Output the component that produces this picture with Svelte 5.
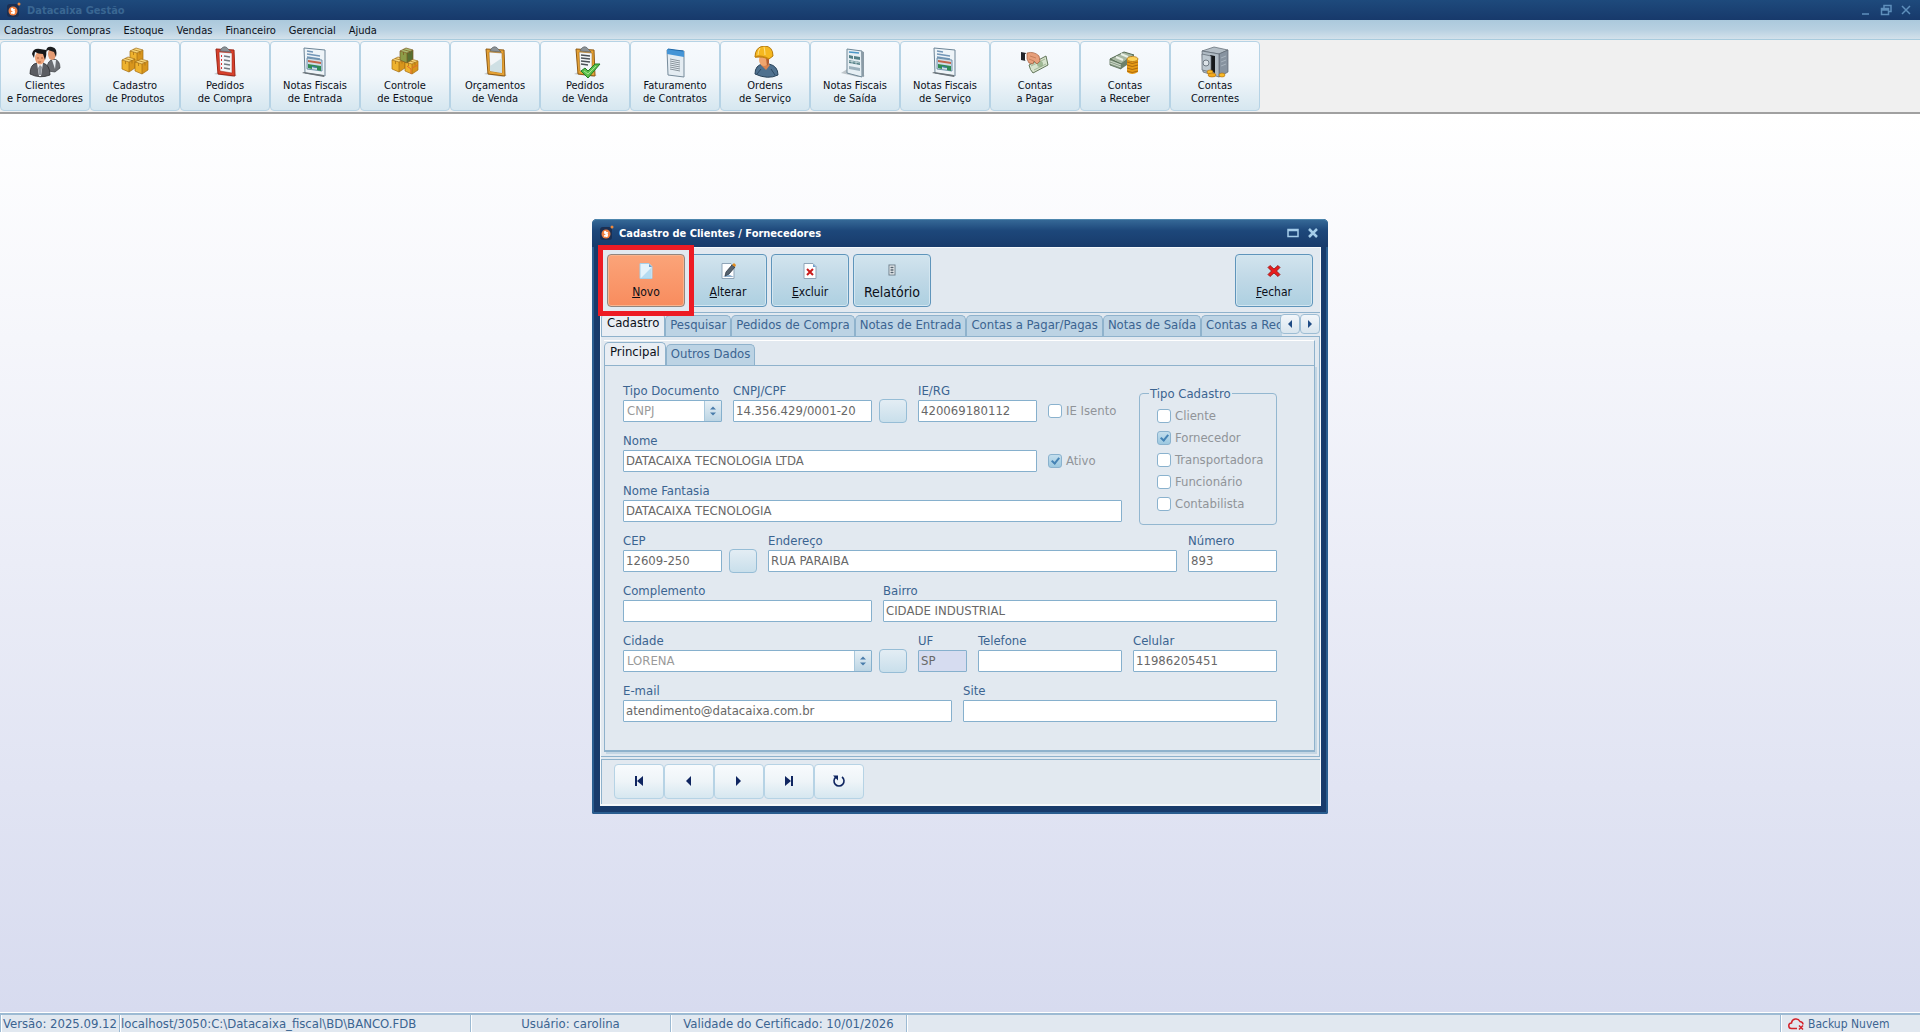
<script>
	const menus = ['Cadastros', 'Compras', 'Estoque', 'Vendas', 'Financeiro', 'Gerencial', 'Ajuda'];

	const shortcuts = [
		{ icon: 'people', lines: ['Clientes', 'e Fornecedores'] },
		{ icon: 'boxes', lines: ['Cadastro', 'de Produtos'] },
		{ icon: 'clipRed', lines: ['Pedidos', 'de Compra'] },
		{ icon: 'invoice', lines: ['Notas Fiscais', 'de Entrada'] },
		{ icon: 'stock', lines: ['Controle', 'de Estoque'] },
		{ icon: 'clipGold', lines: ['Orçamentos', 'de Venda'] },
		{ icon: 'clipCheck', lines: ['Pedidos', 'de Venda'] },
		{ icon: 'contract', lines: ['Faturamento', 'de Contratos'] },
		{ icon: 'worker', lines: ['Ordens', 'de Serviço'] },
		{ icon: 'invoiceOut', lines: ['Notas Fiscais', 'de Saída'] },
		{ icon: 'invoice', lines: ['Notas Fiscais', 'de Serviço'] },
		{ icon: 'pay', lines: ['Contas', 'a Pagar'] },
		{ icon: 'receive', lines: ['Contas', 'a Receber'] },
		{ icon: 'safe', lines: ['Contas', 'Correntes'] }
	];

	const tabs = [
		'Cadastro',
		'Pesquisar',
		'Pedidos de Compra',
		'Notas de Entrada',
		'Contas a Pagar/Pagas',
		'Notas de Saída',
		'Contas a Rec'
	];
	const subTabs = ['Principal', 'Outros Dados'];
	const navs = ['first', 'prev', 'next', 'last', 'refresh'];
	const navLabels = ['Primeiro', 'Anterior', 'Próximo', 'Último', 'Atualizar'];

	let tab = $state('Cadastro');
	let subTab = $state('Principal');

	let kinds = $state([
		{ name: 'Cliente', checked: false },
		{ name: 'Fornecedor', checked: true },
		{ name: 'Transportadora', checked: false },
		{ name: 'Funcionário', checked: false },
		{ name: 'Contabilista', checked: false }
	]);
</script>

{#snippet logo()}
	<svg class="logo" viewBox="0 0 16 16" aria-hidden="true">
		<rect x="1" y="2" width="12" height="13" rx="3" fill="#1b2f52" />
		<circle cx="7" cy="9" r="4.5" fill="#f08040" />
		<path d="M7 6.5c-2 0-2 2 0 2.5s2 2.5 0 2.500M5 7l4 1M5 11l4-1" stroke="#fff" stroke-width="1.3" fill="none" />
		<circle cx="13" cy="2" r="1.5" fill="#f08a3c" />
	</svg>
{/snippet}

{#snippet crate(x, y, green)}
	<g transform="translate({x} {y})">
		<path d="M0 3l6-3 7 2-6 3z" fill={green ? '#a9bf74' : '#f8d87c'} />
		<path d="M0 3l7 2v10l-7-3z" fill={green ? '#8c9c48' : '#eeb22e'} />
		<path d="M7 5l6-3v9l-6 4z" fill={green ? '#567032' : '#d8951c'} />
		<path
			d="M0 3l6-3 7 2-6 3zM0 3v9l7 3 6-4V2M7 5v10M3 1.500l7 2M3.500 4v3M10 3.500v3"
			fill="none"
			stroke={green ? '#7c5a20' : '#a36d12'}
			stroke-width=".7"
		/>
	</g>
{/snippet}

{#snippet clipboard(frame, dark)}
	<path d="M5 28l6-3 17 4-4 2z" fill="#9aa2a8" opacity=".5" />
	<path d="M7 3l18 1 1 26-17-2z" fill={frame} stroke={dark} />
	<path d="M10 6l13 1v20l-12-2z" fill="#f3f6f8" stroke={dark} stroke-width=".5" />
	<path d="M12 3q4-5 8 1l2 2-11-1z" fill="#8b9297" stroke="#5b6166" stroke-width=".7" />
{/snippet}

{#snippet bigIcon(name)}
	<svg class="big-icon" viewBox="0 0 32 32" aria-hidden="true">
		{#if name === 'people'}
			<path d="M18 23q0-9 7-10 6 1 6 9l-5 4-7-1z" fill="#6b6e73" stroke="#3b3d40" stroke-width=".7" />
			<path d="M23 14h4l-1 9z" fill="#e9eef2" />
			<ellipse cx="23" cy="8" rx="4" ry="6" fill="#e39a72" />
			<path d="M17 6q0-6 6-5 6 1 4 10l-2-5-6-2z" fill="#1c1d1f" />
			<path d="M1 28q0-10 7-11h6q7 2 7 12-10 4-20-1z" fill="#5b5d62" stroke="#2c2d30" stroke-width=".8" />
			<path d="M8 17h6l-2 13h-2z" fill="#f4f6f8" />
			<path d="M11 19l2 2-1 8h-2l-1-7z" fill="#8f949b" />
			<ellipse cx="11" cy="12" rx="5" ry="6.500" fill="#f0a47a" />
			<path d="M3 8q1-6 8-5l6 1q1 4-1 10l-2-6q-5 0-8-2l-1 6z" fill="#17181a" />
			<path d="M8 12h2M12 12h2M9 16h3" stroke="#9c4f2c" stroke-width=".8" />
		{:else if name === 'boxes'}
			{@render crate(11, 2, false)}
			{@render crate(3, 11, false)}
			{@render crate(16, 13, false)}
		{:else if name === 'stock'}
			{@render crate(3, 11, false)}
			{@render crate(16, 13, false)}
			{@render crate(11, 2, true)}
			<path d="M18 20l4 3v5M23 22l6-3" stroke="#e0692a" fill="none" />
		{:else if name === 'clipRed'}
			{@render clipboard('#d8412c', '#9c2415')}
			<path d="M15 10l6 1M15 14l6 1M15 18l6 1M15 22l6 1" stroke="#727a80" stroke-width="1.500" />
			<path d="M12 10h1M12 14h1M12 18h1M12 22h1" stroke="#d33" stroke-width="2" />
		{:else if name === 'clipGold'}
			{@render clipboard('#e5a235', '#8f5a12')}
			<path d="M11 20l12-8v15l-12-2z" fill="#cfe0e4" />
		{:else if name === 'clipCheck'}
			{@render clipboard('#e5a235', '#8f5a12')}
			<path d="M12 9l9 1M12 12l9 1M12 15l9 1M12 18l7 1" stroke="#4b5156" stroke-width="1.300" />
			<path d="M12 25l4-3 3 3 7-7h5L19 32z" fill="#5cc04a" stroke="#1f7d26" />
			<path d="M15 25l4 3 8-8" fill="none" stroke="#a6e493" />
		{:else if name === 'invoice'}
			<path d="M5 2l21 2v26L6 27z" fill="#eef4f8" stroke="#6c8496" />
			<path d="M3 27l22 4v-2L5 26z" fill="#6b7379" />
			<path d="M8 5l6 1M8 8l13 2M8 11l13 2" stroke="#7195b6" stroke-width="1.300" />
			<path d="M8 12l15 2v11L8 23z" fill="#cfdde6" stroke="#567f9c" stroke-width=".8" />
			<path d="M9 14l13 2v2l-13-2z" fill="#c4634a" />
			<path d="M9 18l13 2v5l-4-1v-2l-5-1v2l-4-1z" fill="#2f8a52" />
			<path d="M13 20l5 1v1l-5-1z" fill="#3f78b8" />
		{:else if name === 'invoiceOut'}
			<path d="M2 27l8-5 16 8-7 1z" fill="#9da5aa" opacity=".6" />
			<path d="M8 3l15 2v26L8 27z" fill="#e6eff4" stroke="#6f8796" />
			<path d="M22 5l3 1v25l-2-1z" fill="#8b9ba6" />
			<path d="M10 6l10 1" stroke="#4a97c8" stroke-width="1.600" />
			<path d="M10 9l4 1v3l-4-1zM15 10l6 1v3l-6-1zM10 14l11 2v3l-11-2z" fill="#537f86" />
			<path d="M10 20l11 2v3l-11-2z" fill="#9bb1bd" />
			<path d="M10 15l11 2M13 13v5M17 14v5" stroke="#d8e6ea" stroke-width=".7" />
		{:else if name === 'contract'}
			<path d="M8 4l17 1v26L9 29z" fill="#e4ecf2" stroke="#768b9b" />
			<path d="M8 3l17 2v6L8 8z" fill="#4595d6" />
			<path d="M9 3l15 2" stroke="#1f68a8" />
			<path
				d="M11 13l10 2M11 15l10 2M11 17l10 2M11 19l10 2M11 21l10 2M11 23l10 2"
				stroke="#8a959d"
				stroke-width="1"
			/>
		{:else if name === 'worker'}
			<path d="M6 28q0-9 8-10h6q9 2 9 11-10 5-23-1z" fill="#4f718f" stroke="#29435a" />
			<path d="M12 19l5 5 4-5-3-2h-4z" fill="#d8834e" />
			<path d="M8 28l4-5M26 29l-4-6" stroke="#2c4964" />
			<ellipse cx="15" cy="14" rx="5" ry="6" fill="#f0a56e" />
			<path d="M20 10v7l-2 3-1-8z" fill="#b55e32" />
			<path d="M6 11q0-10 9-11 9 0 9 10l-4 3q-6-3-14-2z" fill="#f5b81f" stroke="#b57a0c" />
			<path d="M11 2q-2 3-2 7M15 1q1 4 1 8" stroke="#ffe28a" fill="none" />
			<path d="M6 11q8-2 14 2" stroke="#c98712" fill="none" stroke-width="1.500" />
		{:else if name === 'pay'}
			<path d="M2 6l5 1v8l-5-1z" fill="#22252b" />
			<path d="M6 8l2-1v7l-2 1z" fill="#fff" />
			<path d="M10 19l17-9 2 9-15 8q-3-3-4-8z" fill="#d7e3cd" stroke="#62765a" />
			<circle cx="21" cy="18" r="3" fill="#9fb894" />
			<path d="M12 20l14-7M15 24l12-6" stroke="#8ba37f" stroke-width=".7" />
			<path d="M8 7q7-2 12 3l1 5-3 3-3-3-1 3-4-1-2-4z" fill="#e7a07c" stroke="#a45f3c" stroke-width=".7" />
			<path d="M11 10l6 2M10 13l5 2" stroke="#b87450" stroke-width=".7" />
		{:else if name === 'receive'}
			<path d="M1 13l14-7 10 3-13 9z" fill="#a7b7a2" stroke="#566b54" />
			<path d="M1 13v6l11 4v-5z" fill="#8a9d86" stroke="#566b54" stroke-width=".8" />
			<path d="M1 15l11 4M1 17l11 4" stroke="#dfe8dc" stroke-width=".8" />
			<path d="M12 18v5l6-4v-6z" fill="#6c806a" />
			<path d="M7 11l7 3M12 8l7 3" stroke="#e9f0e6" stroke-width="2" />
			<path d="M18 13v13q5 4 11 0V13z" fill="#e79a14" />
			<path d="M18 16q5 3 11 0M18 19q5 3 11 0M18 22q5 3 11 0M18 25q5 3 11 0" fill="none" stroke="#9c5d0c" stroke-width=".8" />
			<ellipse cx="23.5" cy="13" rx="5.500" ry="2.500" fill="#fcd25a" stroke="#b87610" stroke-width=".8" />
		{:else if name === 'safe'}
			<path d="M3 5l12-4 14 3-9 4z" fill="#b4bec6" stroke="#5c666f" stroke-width=".7" />
			<path d="M20 8l9-4v22l-9 5z" fill="#8793a0" stroke="#5b6670" stroke-width=".7" />
			<path d="M3 5l17 3v23L4 26z" fill="#b0bbc4" stroke="#5b6670" stroke-width=".7" />
			<path d="M11 9l5 1v17l-5-2z" fill="#15181b" />
			<path d="M3 8l9 2v16l-9-2z" fill="#bcc7cf" stroke="#5c666f" stroke-width=".7" />
			<circle cx="7" cy="17" r="3" fill="#dde4e9" stroke="#6f7a83" />
			<path d="M22 12l5-2M22 16l5-2M22 20l5-2" stroke="#a9b4be" />
			<ellipse cx="11" cy="26" rx="3" ry="2" fill="#f7b928" stroke="#a9690d" stroke-width=".6" />
			<ellipse cx="13" cy="29" rx="4" ry="2" fill="#f3a91c" stroke="#a9690d" stroke-width=".6" />
			<ellipse cx="23" cy="29" rx="3" ry="2" fill="#f7b928" stroke="#a9690d" stroke-width=".6" />
		{/if}
	</svg>
{/snippet}

{#snippet toolIcon(name)}
	<svg class="tool-icon" viewBox="0 0 16 16" aria-hidden="true">
		{#if name === 'new' || name === 'edit' || name === 'delete'}
			<path d="M2 .500h9l3 3v12H2z" fill={name === 'new' ? '#e4f3fb' : '#fdfeff'} stroke={name === 'new' ? '#a5cfe8' : '#8fa5b8'} />
			<path d="M11 1v3h3z" fill="#6d9fce" />
		{/if}
		{#if name === 'new'}
			<path d="M3 15L13 5v10z" fill="#b5dcf2" />
		{:else if name === 'edit'}
			<path d="M3 14h11l-6-3z" fill="#91b0cc" />
			<path d="M6 9l6-7 3 2-6 7-4 2z" fill="#56636f" stroke="#303a45" stroke-width=".8" />
			<path d="M12 2l2-2 2 2-1 2z" fill="#e28b1c" />
		{:else if name === 'delete'}
			<path d="M5 6l6 6M11 6l-6 6" stroke="#c91b1b" stroke-width="2" />
		{:else if name === 'report'}
			<rect x="5" y="2" width="6" height="10" fill="#eef2f4" stroke="#70808c" />
			<path d="M6.500 4.500h3M6.500 7h3M6.500 9.500h3" stroke="#56636e" stroke-width="1.300" />
		{:else}
			<path
				d="M4 2.500l4 3.500 4-3.500 2 2L10.500 8l3.500 3.500-2 2-4-3.500-4 3.500-2-2L5.500 8 2 4.500z"
				fill="#e81c1c"
				stroke="#8e1010"
				stroke-width=".8"
			/>
		{/if}
	</svg>
{/snippet}

{#snippet navIcon(name)}
	<svg class="nav-icon" viewBox="0 0 16 16" aria-hidden="true">
		{#if name === 'first'}
			<path d="M5 3v10" stroke="#0f2560" stroke-width="2" /><path d="M12 3v10L6 8z" fill="#0f2560" />
		{:else if name === 'prev'}
			<path d="M10 3v10L5 8z" fill="#0f2560" />
		{:else if name === 'next'}
			<path d="M5 3v10l5-5z" fill="#0f2560" />
		{:else if name === 'last'}
			<path d="M11 3v10" stroke="#0f2560" stroke-width="2" /><path d="M4 3v10l6-5z" fill="#0f2560" />
		{:else}
			<path d="M5 4a5 5 0 1 0 6 0" fill="none" stroke="#0f2560" stroke-width="1.600" />
			<path d="M2 2.500h5v5z" fill="#0f2560" />
		{/if}
	</svg>
{/snippet}

{#snippet field(id, label, value, cls)}
	<div class="field {cls}">
		<label for={id}>{label}</label>
		<input {id} {value} type="text" readonly />
	</div>
{/snippet}

{#snippet combo(id, label, value, cls)}
	<div class="field {cls}">
		<label for={id}>{label}</label>
		<div class="combo">
			<select {id} disabled><option>{value}</option></select>
			<span class="spin">
				<svg viewBox="0 0 8 12" aria-hidden="true">
					<path d="M1 4.500l3-3 3 3zM1 7.500l3 3 3-3z" fill="#4a7dab" />
				</svg>
			</span>
		</div>
	</div>
{/snippet}

<div class="app">
	<header class="titlebar">
		{@render logo()}
		<span class="app-name">Datacaixa Gestão</span>
		<div class="window-controls">
			<button aria-label="Minimizar"><svg viewBox="0 0 12 12"><path d="M2 10h7" /></svg></button>
			<button aria-label="Restaurar">
				<svg viewBox="0 0 12 12"><path d="M4 4V1.500h7v6H9M1.500 4.500h7v6h-7zM1 6h7" /></svg>
			</button>
			<button aria-label="Fechar"><svg viewBox="0 0 12 12"><path d="M2 2l8 8M10 2l-8 8" /></svg></button>
		</div>
	</header>

	<nav class="menubar">
		{#each menus as menu}
			<button>{menu}</button>
		{/each}
	</nav>

	<div class="shortcuts">
		{#each shortcuts as item}
			<button>
				{@render bigIcon(item.icon)}
				<span>{item.lines[0]}<br />{item.lines[1]}</span>
			</button>
		{/each}
	</div>

	<main class="desktop"></main>

	<footer class="status">
		<span class="version">Versão: 2025.09.12</span>
		<span class="database">localhost/3050:C:\Datacaixa_fiscal\BD\BANCO.FDB</span>
		<span class="user">Usuário: carolina</span>
		<span class="certificate">Validade do Certificado: 10/01/2026</span>
		<span class="filler"></span>
		<span class="backup">
			<svg viewBox="0 0 16 12" aria-hidden="true">
				<path
					d="M9 10.500H3.500A2.700 2.700 0 0 1 3.500 5 4.500 4.500 0 0 1 12 3.500Q15 4 15 6.500"
					fill="none"
					stroke="#d3242c"
					stroke-width="1.500"
				/>
				<path d="M11 7.500l4 4M15 7.500l-4 4" stroke="#d3242c" stroke-width="1.500" />
			</svg>
			Backup Nuvem
		</span>
	</footer>

	<div class="window-layer">
		<section class="dialog">
			<header class="dialog-title">
				{@render logo()}
				<h1>Cadastro de Clientes / Fornecedores</h1>
				<div class="window-controls">
					<button aria-label="Maximizar"><svg viewBox="0 0 12 12"><path d="M1 2.500h10v7H1zM1 3.500h10" /></svg></button>
					<button aria-label="Fechar janela">
						<svg viewBox="0 0 12 12"><path d="M2 2l8 8M10 2l-8 8" stroke-width="2.500" /></svg>
					</button>
				</div>
			</header>

			<div class="dialog-body">
				<div class="tools">
					<button class="tool new">
						{@render toolIcon('new')}
						<span><u>N</u>ovo</span>
					</button>
					<button class="tool">
						{@render toolIcon('edit')}
						<span><u>A</u>lterar</span>
					</button>
					<button class="tool">
						{@render toolIcon('delete')}
						<span><u>E</u>xcluir</span>
					</button>
					<button class="tool report">
						{@render toolIcon('report')}
						<span>Relatório</span>
					</button>
					<button class="tool close">
						{@render toolIcon('close')}
						<span><u>F</u>echar</span>
					</button>
				</div>

				<div class="tab-row">
					<div class="tabs" role="tablist">
						{#each tabs as name}
							<button role="tab" aria-selected={tab === name} class:active={tab === name} onclick={() => (tab = name)}>
								{name}
							</button>
						{/each}
					</div>
					<button class="scroll" aria-label="Abas anteriores">
						<svg viewBox="0 0 8 8"><path d="M6 0v8L2 4z" /></svg>
					</button>
					<button class="scroll" aria-label="Próximas abas">
						<svg viewBox="0 0 8 8"><path d="M2 0v8l4-4z" /></svg>
					</button>
				</div>

				<div class="page">
					<div class="tabs sub" role="tablist">
						{#each subTabs as name}
							<button
								role="tab"
								aria-selected={subTab === name}
								class:active={subTab === name}
								onclick={() => (subTab = name)}
							>
								{name}
							</button>
						{/each}
					</div>

					<form class="form">
						<div class="upper">
							<div class="upper-fields">
								<div class="row">
									{@render combo('tipo', 'Tipo Documento', 'CNPJ', 'w-code')}
									{@render field('cnpj', 'CNPJ/CPF', '14.356.429/0001-20', 'w-cnpj')}
									<button type="button" class="lookup" aria-label="Consultar CNPJ"></button>
									{@render field('ie', 'IE/RG', '420069180112', 'w-ie')}
									<label class="check"><input type="checkbox" disabled />IE Isento</label>
								</div>
								<div class="row">
									{@render field('nome', 'Nome', 'DATACAIXA TECNOLOGIA LTDA', 'w-name')}
									<label class="check"><input type="checkbox" checked disabled />Ativo</label>
								</div>
								<div class="row">
									{@render field('fantasia', 'Nome Fantasia', 'DATACAIXA TECNOLOGIA', 'grow')}
								</div>
							</div>
							<fieldset>
								<legend>Tipo Cadastro</legend>
								{#each kinds as kind}
									<label class="check"><input type="checkbox" bind:checked={kind.checked} disabled />{kind.name}</label>
								{/each}
							</fieldset>
						</div>
						<div class="row">
							{@render field('cep', 'CEP', '12609-250', 'w-code')}
							<button type="button" class="lookup" aria-label="Consultar CEP"></button>
							{@render field('endereco', 'Endereço', 'RUA PARAIBA', 'grow')}
							{@render field('numero', 'Número', '893', 'w-number')}
						</div>
						<div class="row">
							{@render field('complemento', 'Complemento', '', 'w-city')}
							{@render field('bairro', 'Bairro', 'CIDADE INDUSTRIAL', 'grow')}
						</div>
						<div class="row">
							{@render combo('cidade', 'Cidade', 'LORENA', 'w-city')}
							<button type="button" class="lookup" aria-label="Consultar cidade"></button>
							{@render field('uf', 'UF', 'SP', 'w-uf')}
							{@render field('telefone', 'Telefone', '', 'grow')}
							{@render field('celular', 'Celular', '11986205451', 'grow')}
						</div>
						<div class="row">
							{@render field('email', 'E-mail', 'atendimento@datacaixa.com.br', 'w-email')}
							{@render field('site', 'Site', '', 'grow')}
						</div>
					</form>
				</div>

				<div class="navigator">
					{#each navs as name, i}
						<button aria-label={navLabels[i]}>{@render navIcon(name)}</button>
					{/each}
				</div>
			</div>
		</section>
	</div>
</div>

<style>
	:global(body) {
		margin: 0;
	}
	.app,
	.app button,
	.app input,
	.app select {
		font-family: 'DejaVu Sans Condensed', 'DejaVu Sans', Tahoma, sans-serif;
	}
	.app {
		position: relative;
		display: flex;
		flex-direction: column;
		min-height: 100vh;
		font-size: 13px;
		color: #3b6491;
	}
	.app * {
		box-sizing: border-box;
	}
	button {
		margin: 0;
		padding: 0;
		border: 0;
		background: none;
		color: inherit;
		font-size: inherit;
	}
	.titlebar {
		display: flex;
		align-items: center;
		height: 20px;
		padding: 0 8px 0 6px;
		background: linear-gradient(#1e4a7c, #17396b);
	}
	.logo {
		width: 16px;
		height: 16px;
		margin-right: 5px;
	}
	.app-name {
		font-size: 11px;
		font-weight: bold;
		color: #3a6793;
	}
	.window-controls {
		display: flex;
		gap: 8px;
		margin-left: auto;
	}
	.window-controls button {
		width: 12px;
		height: 12px;
	}
	.window-controls svg {
		display: block;
		width: 12px;
		height: 12px;
		fill: none;
		stroke: #5e8fbc;
		stroke-width: 1.5;
	}
	.menubar {
		display: flex;
		align-items: center;
		gap: 13px;
		height: 20px;
		padding: 1px 4px 0;
		background: linear-gradient(#abc9dc, #b7d0e1 50%, #d3e1eb);
		border-bottom: 1px solid #a9cbdd;
		font-size: 11px;
		color: #0b0f18;
	}
	.shortcuts {
		display: flex;
		height: 74px;
		padding-top: 1px;
		background: #f0f0f0;
		border-bottom: 2px solid #a0a0a0;
	}
	.shortcuts button {
		display: flex;
		flex-direction: column;
		align-items: center;
		gap: 1px;
		width: 90px;
		height: 70px;
		padding-top: 4px;
		border: 1px solid #b6d3e5;
		border-radius: 4px;
		background: linear-gradient(#f7fafd, #f1f6fa 50%, #d6e7f0);
		font-size: 11px;
		line-height: 13px;
		color: #0b0f18;
	}
	.big-icon {
		flex: none;
		width: 32px;
		height: 32px;
	}
	.desktop {
		flex: 1;
		background: linear-gradient(#fff, #d7dbef);
	}
	.status {
		display: flex;
		height: 20px;
		border-top: 1px solid #fff;
		background: #e1e8f0;
	}
	.status span {
		display: flex;
		align-items: center;
		justify-content: center;
		border-top: 2px solid #9cbad3;
		border-left: 1px solid #9cbad3;
		box-shadow: inset 1px 0 #fff;
		white-space: nowrap;
	}
	.status .version {
		width: 119px;
	}
	.status .database {
		width: 351px;
		padding-left: 1px;
		justify-content: flex-start;
	}
	.status .user {
		width: 200px;
	}
	.status .certificate {
		width: 236px;
	}
	.status .filler {
		flex: 1;
	}
	.status .backup {
		width: 140px;
		padding-left: 7px;
		gap: 4px;
		justify-content: flex-start;
		font-size: 12px;
	}
	.backup svg {
		width: 16px;
		height: 12px;
	}

	/* floating window, centred over the desktop */
	.window-layer {
		position: absolute;
		inset: 0;
		display: grid;
		place-items: center;
	}
	.dialog {
		width: 736px;
		padding: 0 7px 8px 8px;
		border-radius: 5px 5px 2px 2px;
		background: #183b6b;
		box-shadow: inset 0 0 0 2px #2a5d8f;
	}
	.dialog-title {
		display: flex;
		align-items: center;
		height: 28px;
		margin: 0 -7px 0 -8px;
		padding: 0 9px 0 7px;
		border-top: 1px solid #4d86ad;
		border-radius: 5px 5px 0 0;
		background: linear-gradient(#356896, #1d477a 40%, #183b6b);
	}
	.dialog-title h1 {
		margin: 0;
		font-size: 11px;
		color: #fff;
	}
	.dialog-title svg {
		stroke: #a5cdea;
	}
	.dialog-title .logo {
		stroke: none;
		margin-right: 4px;
	}
	.dialog-body {
		background: #e2e9f0;
		border: 1px solid #f6f9fb;
		border-bottom-width: 2px;
	}
	.tools {
		display: flex;
		gap: 4px;
		height: 65px;
		padding: 6px 7px 5px 6px;
		border-bottom: 1px solid #8fb2cc;
	}
	.tool {
		position: relative;
		display: flex;
		flex-direction: column;
		align-items: center;
		gap: 6px;
		width: 78px;
		height: 53px;
		padding-top: 8px;
		border: 1px solid #5f95bb;
		border-radius: 4px;
		background: linear-gradient(#d2e4ee, #bfd8e6 50%, #add0e1);
		box-shadow: inset 0 0 0 1px #d3e6f0;
		font-size: 12px;
		line-height: 14px;
		color: #0b0f18;
	}
	.tool.new {
		border-color: #93867f;
		background: linear-gradient(#fba479, #f88c5e);
		box-shadow: inset 0 0 0 1px #f9b48e;
	}
	.tool.new::after {
		content: '';
		position: absolute;
		z-index: 1;
		inset: -10px;
		border: 5px solid #ed1b24;
	}
	.tool.report {
		font-size: 14px;
	}
	.tool.close {
		margin-left: auto;
	}
	.tool-icon {
		width: 16px;
		height: 16px;
	}
	.tab-row {
		display: flex;
		height: 24px;
		padding-top: 1px;
		border-bottom: 1px solid #8fb2cc;
	}
	.tabs {
		display: flex;
		flex: 1;
		align-items: flex-end;
		min-width: 0;
	}
	.tabs button {
		flex: none;
		height: 21px;
		padding: 0 4px 3px;
		border: 1px solid #8fb2cc;
		border-bottom: 0;
		border-radius: 5px 5px 0 0;
		background: #bcd3e4;
		white-space: nowrap;
	}
	.tabs .active {
		height: 23px;
		padding: 0 5px 4px;
		background: #e9eef4;
		color: #0b0f18;
	}
	.tab-row .tabs button:last-child {
		flex: 1;
		padding-right: 0;
		border-right: 0;
		border-radius: 5px 0 0 0;
		text-align: left;
	}
	.scroll {
		width: 20px;
		height: 20px;
		border: 1px solid #9dbdd4;
		border-radius: 4px;
		background: linear-gradient(#f2f6fa, #d9e5ee);
	}
	.scroll svg {
		width: 8px;
		height: 8px;
		fill: #1f4b84;
	}
	.page {
		padding: 3px 4px 4px 3px;
		border-right: 1px solid #8fb2cc;
		border-bottom: 1px solid #8fb2cc;
	}
	.sub {
		height: 25px;
		border-top: 1px solid #fff;
		border-right: 1px solid #8fb2cc;
	}
	.form {
		display: flex;
		flex-direction: column;
		gap: 12px;
		padding: 18px 37px 28px 18px;
		border: 1px solid #8fb2cc;
		border-bottom: 2px solid #8fb2cc;
		box-shadow: 2px 2px #c4d6e4;
	}
	.upper {
		display: flex;
		gap: 17px;
	}
	.upper-fields {
		display: flex;
		flex: 1;
		flex-direction: column;
		gap: 12px;
	}
	.row {
		display: flex;
		align-items: flex-end;
		gap: 11px;
	}
	.field {
		display: flex;
		flex: none;
		flex-direction: column;
		gap: 2px;
	}
	.field label {
		line-height: 14px;
	}
	.field.grow {
		flex: 1;
		min-width: 0;
	}
	.w-code {
		width: 99px;
	}
	.w-cnpj {
		width: 139px;
	}
	.w-ie {
		width: 119px;
	}
	.w-name {
		width: 414px;
	}
	.w-number {
		width: 89px;
	}
	.w-city {
		width: 249px;
	}
	.w-uf {
		width: 49px;
	}
	.w-email {
		width: 329px;
	}
	input[type='text'],
	select {
		width: 100%;
		height: 22px;
		padding: 0 0 1px 2px;
		border: 1px solid #86b0cd;
		border-radius: 1px;
		background: #fff;
		color: #686868;
		font-size: 13px;
	}
	.w-uf input[type='text'] {
		background: #d6dcf0;
	}
	.combo {
		position: relative;
	}
	select {
		display: block;
		padding-left: 3px;
		appearance: none;
		color: #9a9a9a;
		opacity: 1;
	}
	.spin {
		position: absolute;
		inset: 1px 1px 1px auto;
		display: grid;
		place-items: center;
		width: 17px;
		border-left: 1px solid #a9c8dc;
		background: linear-gradient(#e6eff5, #bcd5e4);
		pointer-events: none;
	}
	.spin svg {
		width: 8px;
		height: 12px;
	}
	.lookup {
		width: 28px;
		height: 24px;
		margin: 0 0 -1px -4px;
		border: 1px solid #96bdd6;
		border-radius: 4px;
		background: linear-gradient(#e3edf4, #c9dfeb);
	}
	.check {
		display: flex;
		align-items: center;
		gap: 4px;
		height: 22px;
		color: #909499;
		white-space: nowrap;
	}
	.check input {
		display: grid;
		place-items: center;
		flex: none;
		width: 14px;
		height: 14px;
		margin: 0;
		appearance: none;
		border: 1px solid #8ab2ce;
		border-radius: 3px;
		background: #fff;
	}
	.check input:checked {
		background: linear-gradient(#c4deed, #9cc8e0);
	}
	.check input:checked::before {
		content: '';
		width: 3px;
		height: 6px;
		margin-bottom: 2px;
		border: solid #4583b5;
		border-width: 0 2px 2px 0;
		transform: rotate(40deg);
	}
	fieldset {
		width: 138px;
		height: 138px;
		min-width: 0;
		margin: 3px 0 -4px;
		padding: 4px 0 0 17px;
		border: 1px solid #93b7d0;
		border-radius: 4px;
	}
	legend {
		margin-left: -8px;
		padding: 0 1px;
		line-height: 14px;
	}
	.navigator {
		display: flex;
		height: 45px;
		margin-top: 2px;
		padding: 4px 12px;
		border-top: 1px solid #8fb2cc;
		border-left: 1px solid #8fb2cc;
	}
	.navigator button {
		display: grid;
		place-items: center;
		width: 50px;
		height: 35px;
		border: 1px solid #b6d3e5;
		border-radius: 4px;
		background: linear-gradient(#f8fbfd, #eef4f8 50%, #d6e7f0);
	}
	.nav-icon {
		width: 16px;
		height: 16px;
	}
</style>
